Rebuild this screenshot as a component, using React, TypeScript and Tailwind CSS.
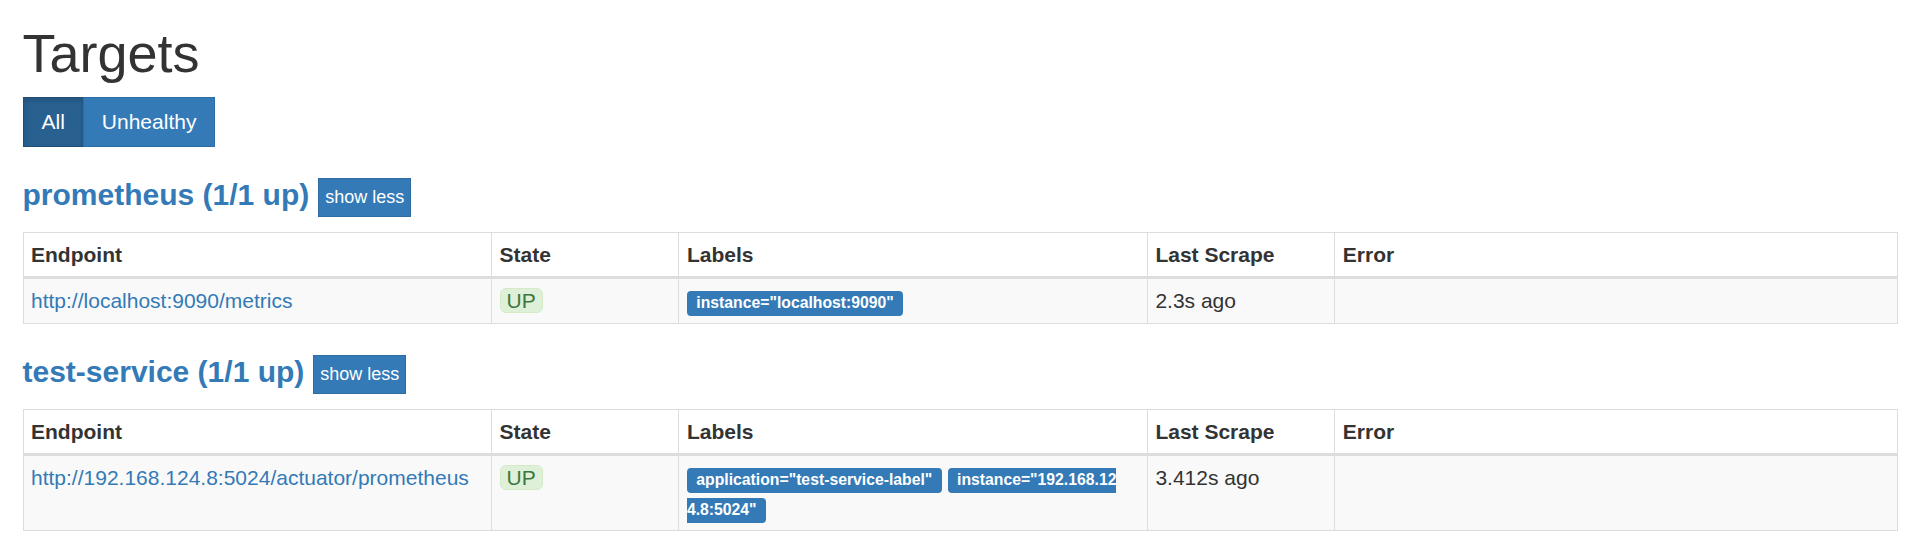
import React from 'react';

interface Target {
  endpoint: string;
  labels: string[];
  lastScrape: string;
}

interface Pool {
  job: string;
  healthy: number;
  total: number;
  targets: Target[];
}

const pools: Pool[] = [
  {
    job: 'prometheus',
    healthy: 1,
    total: 1,
    targets: [
      {
        endpoint: 'http://localhost:9090/metrics',
        labels: ['instance="localhost:9090"'],
        lastScrape: '2.3s ago',
      },
    ],
  },
  {
    job: 'test-service',
    healthy: 1,
    total: 1,
    targets: [
      {
        endpoint: 'http://192.168.124.8:5024/actuator/prometheus',
        labels: ['application="test-service-label"', 'instance="192.168.124.8:5024"'],
        lastScrape: '3.412s ago',
      },
    ],
  },
];

const headers = [
  { name: 'Endpoint', width: 'w-[25%]' },
  { name: 'State', width: 'w-[10%]' },
  { name: 'Labels', width: 'w-[25%]' },
  { name: 'Last Scrape', width: 'w-[10%]' },
  { name: 'Error', width: 'w-[30%]' },
];

const TargetTable = ({ pool }: { pool: Pool }) => (
  <section>
    {/* Job header */}
    <div className="mt-[31px] flex items-start">
      <h2 className="text-[30px] font-bold leading-[33px]">
        <a href="#" className="text-[#337ab7]">
          {pool.job} ({pool.healthy}/{pool.total} up)
        </a>
      </h2>
      <button className="ml-[9px] border border-[#2e6da4] bg-[#337ab7] px-[6px] py-[5px] text-[18px] leading-[27px] text-white">
        show less
      </button>
    </div>

    <table className="mt-[15px] w-full table-fixed border-collapse border border-[#ddd]">
      <thead>
        <tr>
          {headers.map((h) => (
            <th
              key={h.name}
              className={`${h.width} border border-b-[3px] border-[#ddd] px-[7.5px] py-[6.5px] text-left align-bottom font-bold leading-[30px]`}
            >
              {h.name}
            </th>
          ))}
        </tr>
      </thead>
      <tbody>
        {pool.targets.map((t) => (
          <tr key={t.endpoint} className="bg-[#f9f9f9]">
            <td className="border border-[#ddd] px-[7.5px] py-[7px] align-top leading-[30px]">
              <a href="#" className="text-[#337ab7]">{t.endpoint}</a>
            </td>
            <td className="border border-[#ddd] px-[7.5px] py-[7px] align-top leading-[30px]">
              <span className="inline-block h-[25px] rounded-[6px] border border-[#d6e9c6] bg-[#dff0d8] px-[6px] leading-[23px] text-[#3c763d]">
                UP
              </span>
            </td>
            <td className="break-all border border-[#ddd] py-[7px] pl-[7.5px] pr-[27px] align-top leading-[30px]">
              {t.labels.map((l, i) => (
                <React.Fragment key={l}>
                  {i > 0 && ' '}
                  <span className="rounded-[4px] bg-[#337ab7] px-[9.45px] pt-[3.15px] pb-[4.7px] text-[15.75px] font-bold leading-none text-white">
                    {l}
                  </span>
                </React.Fragment>
              ))}
            </td>
            <td className="border border-[#ddd] px-[7.5px] py-[7px] align-top leading-[30px]">{t.lastScrape}</td>
            <td className="border border-[#ddd] px-[7.5px] py-[7px] align-top leading-[30px]"></td>
          </tr>
        ))}
      </tbody>
    </table>
  </section>
);

export default function App() {
  return (
    <div className="min-h-[546px] bg-white px-[22.5px] font-['Liberation_Sans',Arial,sans-serif] text-[21px] text-[#333]">
      <h1 className="mt-[24px] text-[54px] font-medium leading-[59px]">Targets</h1>

      {/* Filter buttons */}
      <div className="mt-[14px] flex w-fit">
        <button className="border border-[#204d74] bg-[#286090] px-[18px] py-[9px] leading-[30px] text-white shadow-[inset_0_3px_5px_rgba(0,0,0,0.125)]">
          All
        </button>
        <button className="-ml-px border border-[#2e6da4] bg-[#337ab7] px-[18px] py-[9px] leading-[30px] text-white">
          Unhealthy
        </button>
      </div>

      {pools.map((p) => (
        <TargetTable key={p.job} pool={p} />
      ))}
    </div>
  );
}
